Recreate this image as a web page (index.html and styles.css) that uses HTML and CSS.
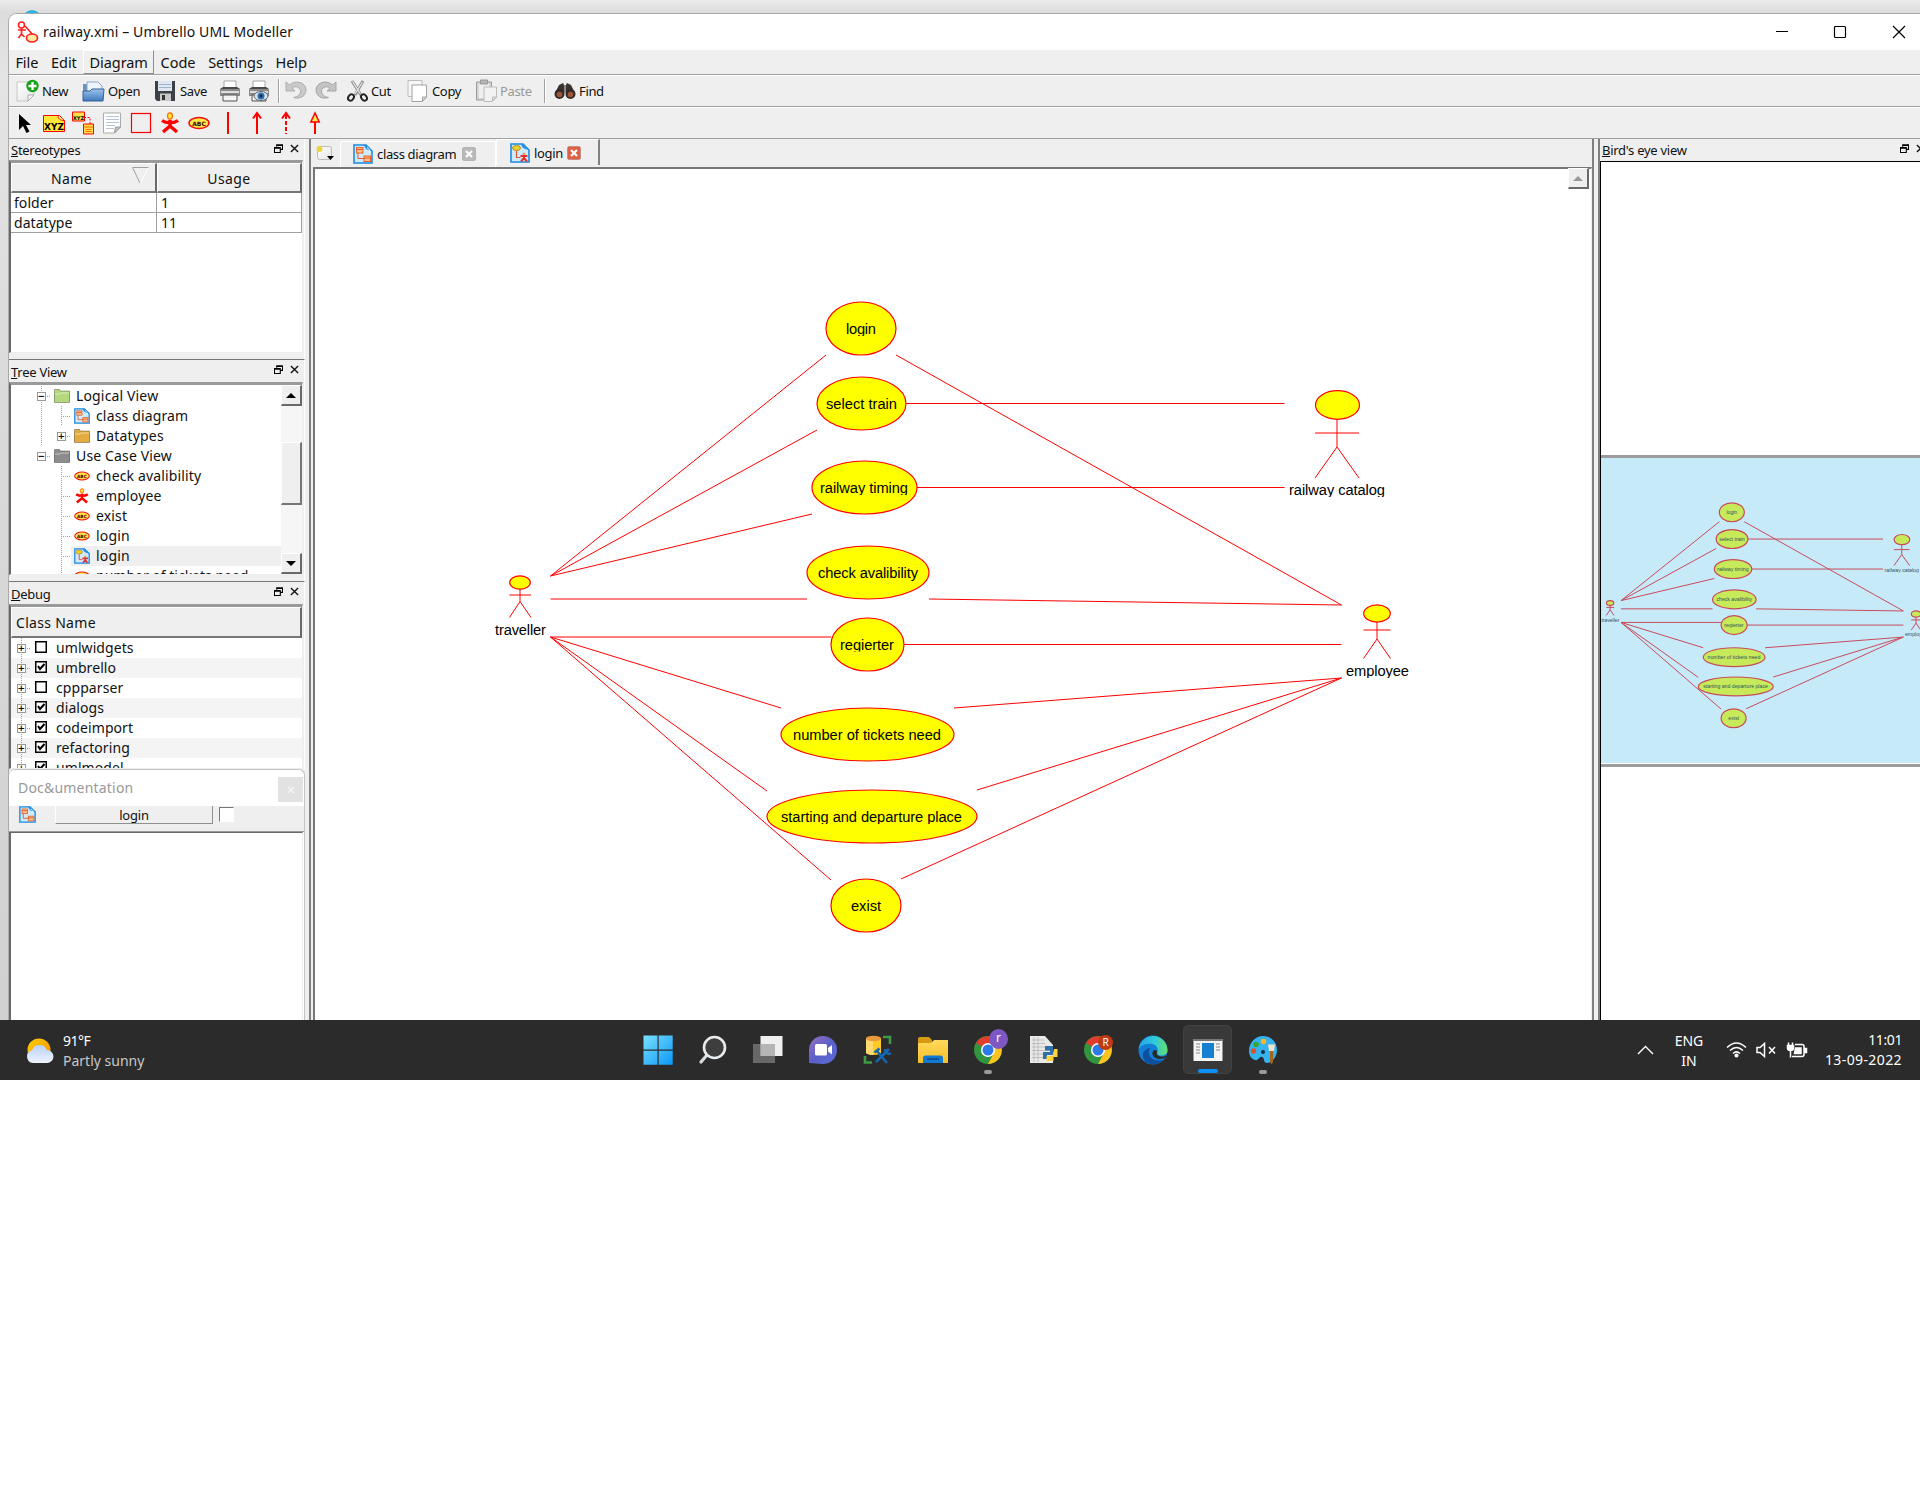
FILE: index.html
```html
<!DOCTYPE html>
<html lang="en">
<head>
<meta charset="utf-8">
<title>railway.xmi – Umbrello UML Modeller</title>
<link rel="stylesheet" href="styles.css">
</head>
<body>
<svg class="defs" width="0" height="0" aria-hidden="true">
  <defs>
    <linearGradient id="gBlue" x1="0" y1="0" x2="0" y2="1"><stop offset="0" stop-color="#9cc4ec"/><stop offset="1" stop-color="#3f79bd"/></linearGradient>
    <linearGradient id="gWin" x1="0" y1="0" x2="1" y2="1"><stop offset="0" stop-color="#7be0ff"/><stop offset="1" stop-color="#0a97f8"/></linearGradient>
    <linearGradient id="gSun" x1="0" y1="0" x2="1" y2="1"><stop offset="0" stop-color="#ffd000"/><stop offset="1" stop-color="#f58a00"/></linearGradient>
    <linearGradient id="gCloud" x1="0" y1="0" x2="0" y2="1"><stop offset="0" stop-color="#b9d2fb"/><stop offset="1" stop-color="#eef2fa"/></linearGradient>
    <linearGradient id="gChat" x1="0" y1="0" x2="1" y2="1"><stop offset="0" stop-color="#9a6fc0"/><stop offset=".5" stop-color="#5b5fc7"/><stop offset="1" stop-color="#5a6fe0"/></linearGradient>
    <linearGradient id="gFold" x1="0" y1="0" x2="0" y2="1"><stop offset="0" stop-color="#ffd95c"/><stop offset="1" stop-color="#f9bd28"/></linearGradient>
    <linearGradient id="gEdge" x1="0" y1="0" x2="1" y2="0"><stop offset="0" stop-color="#22a4e8"/><stop offset=".55" stop-color="#30c8dd"/><stop offset="1" stop-color="#65e06a"/></linearGradient>
    <linearGradient id="gPage" x1="0" y1="0" x2="1" y2="1"><stop offset="0" stop-color="#fff"/><stop offset="1" stop-color="#e4e4e4"/></linearGradient>
    <symbol id="classdoc" viewBox="0 0 20 20"><path d="M1 1h12l6 6v12H1z" fill="#cfeafa" stroke="#1d8ae0" stroke-width="1.6"/><path d="M11 1c1 4 3 5 8 6L13 1z" fill="#2492e6"/><path d="M14 3.500c2 1 3 2.500 2.500 5" fill="none" stroke="#fff" stroke-width="1"/><rect x="3.500" y="3.500" width="6.500" height="5.500" fill="#ffbf8a" stroke="#e0662c"/><rect x="11" y="12" width="6.500" height="5.500" fill="#ffbf8a" stroke="#e0662c"/><path d="M5 9v5.500h6M3.500 5.500H10M11 14h6" fill="none" stroke="#e0562c"/></symbol>
    <symbol id="usedoc" viewBox="0 0 20 20"><path d="M1 1h12l6 6v12H1z" fill="#cfeafa" stroke="#1d8ae0" stroke-width="1.600"/><path d="M11 1c1 4 3 5 8 6L13 1z" fill="#2492e6"/><ellipse cx="6.500" cy="5" rx="4" ry="2.500" fill="#e8d430" stroke="#b98820"/><path d="M6.500 8v6.500h4" fill="none" stroke="#e0562c" stroke-width="1.200"/><circle cx="14" cy="11" r="1.500" fill="#e8a060"/><path d="M10.500 13h7M14 12.500v2.500l-3 3.500M14 15l3 3.500" stroke="#e83030" stroke-width="2" fill="none"/></symbol>
    <symbol id="folder" viewBox="0 0 16 16"><path d="M.5 1.500h5l1 1.500h9v11H.5z" fill="currentColor"/><path d="M.5 5h5.500l1-1h8.500v10.500H.5z" fill="currentColor"/><path d="M1 6h5l1-1h8" stroke="#fff" stroke-opacity=".5" fill="none"/><path d="M.5 1.500h5l1 1.500h9v11.500H.5z" stroke="#000" stroke-opacity=".3" fill="none"/></symbol>
    <symbol id="oval" viewBox="0 0 22 13"><ellipse cx="11" cy="6.500" rx="10" ry="5.500" fill="#ffe94a" stroke="#f20d0d" stroke-width="1.500"/><text x="11" y="9.200" text-anchor="middle" class="tiny">ABC</text></symbol>
    <symbol id="actor" viewBox="0 0 20 22"><ellipse cx="10" cy="4" rx="2.500" ry="3.200" fill="#ffe23a" stroke="#ff6a00" stroke-width="1.200"/><path d="M2 8.500c4 3 12 3 16 0M10 8v6M3 20l7-6 7 6" fill="none" stroke="#f00" stroke-width="3.400"/></symbol>
    <symbol id="float" viewBox="0 0 10 10"><path d="M3 3V.8h6.500V6H7.500M.5 4h6.500v5.500H.5zM.5 4.800h6.500M3 1.500h6.500" fill="none" stroke="#000" stroke-width="1.200"/></symbol>
    <symbol id="x" viewBox="0 0 10 10"><path d="M1 1l8 8M9 1L1 9" stroke="currentColor" stroke-width="1.500" fill="none"/></symbol>
    <symbol id="tabx" viewBox="0 0 14 14"><rect x=".5" y=".5" width="13" height="13" rx="1.500" fill="currentColor" stroke="#000" stroke-opacity=".15"/><path d="M4 4l6 6M10 4l-6 6" stroke="#fff" stroke-width="2.200"/></symbol>
    <symbol id="printer" viewBox="0 0 22 22"><path d="M5 1h12v8H5z" fill="#fff" stroke="#a6a6a6"/><path d="M1 9h20v7H1z" fill="#8c8c8c"/><path d="M1 9l3-2h14l3 2z" fill="#4b4b4b"/><path d="M2 12h18" stroke="#ddd" stroke-width="2"/><path d="M4 15h14v6H4z" fill="#f4f4f4" stroke="#555"/></symbol>
    <symbol id="chrome" viewBox="0 0 30 30"><circle cx="15" cy="15" r="14" fill="#31943f"/><path d="M15 15L3 8A14 14 0 0 1 27.500 9z" fill="#e33b2e"/><path d="M15 29A14 14 0 0 0 27.500 9H15l6 9z" fill="#fcc31e"/><circle cx="15" cy="15" r="7" fill="#fff"/><circle cx="15" cy="15" r="5.500" fill="#2c7be8"/></symbol>
  </defs>
</svg>

<div class="desktop">
  <svg class="peek" width="14" height="3" viewBox="0 0 14 3"><path d="M0 3q7-6 14 0z" fill="#27b4e0"/></svg>
  <div class="window">
    <header class="titlebar">
      <svg class="logo" width="22" height="22" viewBox="0 0 22 22" fill="none" stroke="#f22"><circle cx="4.500" cy="4" r="3" stroke-width="1.600"/><path d="M1 9h8M4.500 7v6l-3 4M4.500 13l3 3M8 5l8 9" stroke-width="1.700"/><ellipse cx="15" cy="17" rx="5.500" ry="4" fill="#ffe9a0" stroke-width="1.700"/></svg>
      <span class="title">railway.xmi – Umbrello UML Modeller</span>
      <svg class="winbtns" width="146" height="16" viewBox="0 0 146 16" fill="none" stroke="#000" stroke-width="1.200"><path d="M2 7.500h12"/><rect x="60.500" y="2.500" width="11" height="11" rx="1"/><path d="M119 2l12 12M131 2l-12 12"/></svg>
    </header>
    <nav class="menubar"><span>File</span><span>Edit</span><span class="active">Diagram</span><span>Code</span><span>Settings</span><span>Help</span></nav>
    <div class="toolbar">
      <div class="tool w66"><svg width="24" height="24" viewBox="0 0 24 24"><path d="M1 3h17v13l-6 6H1z" fill="url(#gPage)" stroke="#c4c8c4"/><path d="M12 22v-6h6z" fill="#f8f8f8" stroke="#aaa"/><circle cx="16.500" cy="7" r="6.200" fill="#17a317"/><path d="M16.500 3v8M12.500 7h8" stroke="#fff" stroke-width="2.400"/></svg>New</div>
      <div class="tool w72"><svg width="24" height="24" viewBox="0 0 24 24"><path d="M1 5h6l2 3v14H1z" fill="#6d93bd"/><path d="M5 3h11l4 4v9H5z" fill="#eef4fb" stroke="#8ba6c4"/><path d="M1 12h7l2-2h12l-1 12H1z" fill="url(#gBlue)" stroke="#35619a"/></svg>Open</div>
      <div class="tool wide w64"><svg width="22" height="22" viewBox="0 0 22 22"><path d="M1 1h20v20H3l-2-2z" fill="#3d4046"/><rect x="4" y="1" width="14" height="10" fill="#dfe8f2"/><path d="M5 4.500h12M5 7.500h12" stroke="#9db3c9"/><rect x="6" y="13.500" width="11" height="7.500" fill="#c9c9c9"/><rect x="8" y="15" width="3" height="5" fill="#333"/></svg>Save</div>
      <div class="tool w29"><svg width="22" height="22"><use href="#printer"/></svg></div>
      <div class="tool w30"><svg width="23" height="22" viewBox="0 0 23 22"><use href="#printer" width="22" height="22"/><ellipse cx="13" cy="16" rx="7" ry="4.500" fill="#cfe4f5" stroke="#666"/><circle cx="13" cy="16" r="3.500" fill="#2f6fae"/><circle cx="13" cy="16" r="1.400" fill="#123"/></svg></div>
      <div class="sep"></div>
      <div class="tool w29"><svg width="23" height="22" viewBox="0 0 23 22"><path d="M1 2v9h9L7 8c4-3 9 0 8.500 4-.5 3-3 5-7 5.500 6 2 12-1 12.500-7C21.500 3 11-1 4.500 5z" fill="#c9c9c9" stroke="#adadad"/></svg></div>
      <div class="tool w33"><svg width="23" height="22" viewBox="0 0 23 22"><path d="M22 2v9h-9l3-3c-4-3-9 0-8.500 4 .5 3 3 5 7 5.500-6 2-12-1-12.500-7C1.500 3 12-1 18.500 5z" fill="#c4c4c4" stroke="#a5a5a5"/></svg></div>
      <div class="tool w60"><svg width="22" height="24" viewBox="0 0 22 24" fill="none"><path d="M5 2l9 14M16 2L8 16" stroke="#8d8d8d" stroke-width="3"/><path d="M5.500 2.500l8 12.500M15.500 3L8 15" stroke="#e8e8e8" stroke-width="1.200"/><ellipse cx="4" cy="18.500" rx="2.600" ry="3.400" stroke="#222" stroke-width="2" transform="rotate(35 4 18.500)"/><ellipse cx="17" cy="18.500" rx="2.600" ry="3.400" stroke="#222" stroke-width="2" transform="rotate(-35 17 18.500)"/></svg>Cut</div>
      <div class="tool wide w68"><svg width="21" height="24" viewBox="0 0 21 24"><path d="M1 1.500h14v16H1z" fill="#f6f6f6" stroke="#bdbdbd"/><path d="M5 6h14.500v12l-4 4.500H5z" fill="#fff" stroke="#a2a2a2"/><path d="M15.500 22v-4h4z" fill="#e2e2e2" stroke="#a2a2a2"/></svg>Copy</div>
      <div class="tool w69 off"><svg width="23" height="24" viewBox="0 0 23 24"><path d="M1.500 3h15v18h-15z" fill="#d5d5d5" stroke="#9a9a9a"/><path d="M4 5h10v14H4z" fill="#efefef"/><path d="M5.500 1h7v4h-7z" fill="#b5b5b5" stroke="#999"/><path d="M9 8h12.500v10l-4 4.500H9z" fill="#f2f2f2" stroke="#bcbcbc"/><path d="M17.500 22v-4h4z" fill="#ddd" stroke="#bbb"/></svg>Paste</div>
      <div class="sep"></div>
      <div class="tool find"><svg width="22" height="18" viewBox="0 0 22 18"><path d="M5 3l4-2 1 2h2l1-2 4 2 4 8H1z" fill="#3b3330"/><circle cx="5.500" cy="12" r="5" fill="#332b29"/><circle cx="16.500" cy="12" r="5" fill="#332b29"/><circle cx="5.500" cy="12.500" r="2.800" fill="#9c5636"/><circle cx="16.500" cy="12.500" r="2.800" fill="#9c5636"/><path d="M10 3h2v8h-2z" fill="#888"/></svg>Find</div>
    </div>
    <div class="toolbar palette">
      <svg viewBox="0 0 24 24"><path d="M6 3v16l4-4 3.500 7 3-1.500L13 14h5z" fill="#000"/></svg>
      <svg viewBox="0 0 24 24"><path d="M1.500 4.500h16l5 5v11h-21z" fill="#ffe83a" stroke="#f00"/><path d="M16 4.500c0 3 2 5 6.500 5" fill="#fff3a0" stroke="#f00"/><text x="12" y="18.500" text-anchor="middle" class="xyz">XYZ</text></svg>
      <svg viewBox="0 0 24 24"><path d="M1.500 1h12v9h-12zM12.500 13h10v10h-10z" fill="#ffe04a" stroke="#f00"/><path d="M12.500 16h10M14.500 18.500h6M14.500 20.500h6" stroke="#f60"/><path d="M13 6.500h6V13" fill="none" stroke="#f00" stroke-dasharray="2 1.500"/><text x="7.500" y="8.500" text-anchor="middle" class="xyz s">XYZ</text></svg>
      <svg viewBox="0 0 24 24"><path d="M3.500 2h17v14l-6 6h-11z" fill="#fff" stroke="#aaa"/><path d="M6 5.500h13M6 8.500h13M6 11.500h13M6 14.500h9M6 17.500h8" stroke="#b8c4d4"/><path d="M14.500 22l1-6h5z" fill="#c4c4c4" stroke="#999"/></svg>
      <svg viewBox="0 0 24 24"><rect x="2.500" y="2.500" width="19" height="19" fill="none" stroke="#f00" stroke-width="1.200"/></svg>
      <svg viewBox="0 0 24 24"><use href="#actor" x="1" y="1" width="22" height="22"/></svg>
      <svg viewBox="0 0 24 24"><use href="#oval" x="1" y="5" width="22" height="14"/></svg>
      <svg viewBox="0 0 24 24"><path d="M12 1v22" stroke="#f00" stroke-width="2"/></svg>
      <svg viewBox="0 0 24 24"><path d="M12 2v21M8 7.500L12 2l4 5.500" fill="none" stroke="#f00" stroke-width="2"/></svg>
      <svg viewBox="0 0 24 24"><path d="M12 4v19" stroke="#f00" stroke-width="2" stroke-dasharray="4 2"/><path d="M8 7.500L12 2l4 5.500" fill="none" stroke="#f00" stroke-width="2"/></svg>
      <svg viewBox="0 0 24 24"><path d="M12 10v13" stroke="#f00" stroke-width="2"/><path d="M7.800 11L12 2l4.200 9z" fill="#ffe84a" stroke="#f00" stroke-width="1.500"/></svg>
    </div>

    <div class="main">
      <aside class="left">
        <section class="dock stereo">
          <h2><span><u>S</u>tereotypes</span><i><svg width="9" height="9"><use href="#float"/></svg><svg width="9" height="9"><use href="#x"/></svg></i></h2>
          <div class="pane">
            <div class="grid head"><b>Name<svg width="17" height="17" viewBox="0 0 17 17" fill="none"><path d="M8 16L.5.5h16" stroke="#a0a0a0"/><path d="M16 1L8.500 16" stroke="#fff"/></svg></b><b>Usage</b></div>
            <div class="grid"><span>folder</span><span>1</span></div>
            <div class="grid"><span>datatype</span><span>11</span></div>
          </div>
        </section>
        <section class="dock treeview">
          <h2><span><u>T</u>ree View</span><i><svg width="9" height="9"><use href="#float"/></svg><svg width="9" height="9"><use href="#x"/></svg></i></h2>
          <div class="pane split">
            <div class="tree">
              <div class="row"><s class="g v h"><em>−</em></s><svg class="green"><use href="#folder"/></svg>Logical View</div>
              <div class="row"><s class="g v"></s><s class="g v h"></s><svg><use href="#classdoc"/></svg>class diagram</div>
              <div class="row"><s class="g v"></s><s class="g h"><em>+</em></s><svg class="gold"><use href="#folder"/></svg>Datatypes</div>
              <div class="row"><s class="g h"><em>−</em></s><svg class="gray"><use href="#folder"/></svg>Use Case View</div>
              <div class="row"><s class="g"></s><s class="g v h"></s><svg><use href="#oval"/></svg>check avalibility</div>
              <div class="row"><s class="g"></s><s class="g v h"></s><svg><use href="#actor"/></svg>employee</div>
              <div class="row"><s class="g"></s><s class="g v h"></s><svg><use href="#oval"/></svg>exist</div>
              <div class="row"><s class="g"></s><s class="g v h"></s><svg><use href="#oval"/></svg>login</div>
              <div class="row"><s class="g"></s><s class="g v h"></s><span class="sel"><svg><use href="#usedoc"/></svg>login</span></div>
              <div class="row last"><s class="g"></s><s class="g v h"></s><svg><use href="#oval"/></svg>number of tickets need</div>
            </div>
            <div class="scroll"><div class="sb"><svg width="10" height="5" viewBox="0 0 10 5"><path d="M0 5l5-5 5 5z"/></svg></div><div class="thumb"></div><div class="sb"><svg width="10" height="5" viewBox="0 0 10 5"><path d="M0 0l5 5 5-5z"/></svg></div></div>
          </div>
        </section>
        <section class="dock debug">
          <h2><span><u>D</u>ebug</span><i><svg width="9" height="9"><use href="#float"/></svg><svg width="9" height="9"><use href="#x"/></svg></i></h2>
          <div class="pane">
            <div class="classhead">Class Name</div>
            <div class="checks">
              <div class="row"><s class="g v h"><em>+</em></s><svg class="cb"><path d="M.75.75h10.500v10.500H.75z"/></svg>umlwidgets</div>
              <div class="row"><s class="g v h"><em>+</em></s><svg class="cb"><path d="M.75.75h10.500v10.500H.75z"/><path class="tick" d="M3 5l2 3 4.500-5"/></svg>umbrello</div>
              <div class="row"><s class="g v h"><em>+</em></s><svg class="cb"><path d="M.75.75h10.500v10.500H.75z"/></svg>cppparser</div>
              <div class="row"><s class="g v h"><em>+</em></s><svg class="cb"><path d="M.75.75h10.500v10.500H.75z"/><path class="tick" d="M3 5l2 3 4.500-5"/></svg>dialogs</div>
              <div class="row"><s class="g v h"><em>+</em></s><svg class="cb"><path d="M.75.75h10.500v10.500H.75z"/><path class="tick" d="M3 5l2 3 4.500-5"/></svg>codeimport</div>
              <div class="row"><s class="g v h"><em>+</em></s><svg class="cb"><path d="M.75.75h10.500v10.500H.75z"/><path class="tick" d="M3 5l2 3 4.500-5"/></svg>refactoring</div>
              <div class="row"><s class="g v h"><em>+</em></s><svg class="cb"><path d="M.75.75h10.500v10.500H.75z"/><path class="tick" d="M3 5l2 3 4.500-5"/></svg>umlmodel</div>
            </div>
          </div>
        </section>
        <section class="docpanel">
          <div class="doctitle"><span>Doc&amp;umentation</span><div><svg width="8" height="8"><use href="#x"/></svg></div></div>
          <div class="docbar"><svg width="17" height="17"><use href="#classdoc"/></svg><div class="docbtn">login</div><div class="doccheck"></div></div>
          <div class="doctext"></div>
        </section>
      </aside>

      <main class="center">
        <div class="tabs">
          <svg class="newtab" width="18" height="16" viewBox="0 0 18 16"><rect x="1.500" y="1.500" width="14" height="13" rx="2" fill="url(#gPage)" stroke="#bbb"/><circle cx="3.500" cy="4" r="3" fill="#f0d43c"/><path d="M11 11h7l-3.500 4z" fill="#000"/></svg>
          <div class="tab"><svg width="20" height="20"><use href="#classdoc"/></svg><span>class diagram</span><svg class="tx" width="14" height="14"><use href="#tabx"/></svg></div>
          <div class="tab current"><svg width="20" height="20"><use href="#usedoc"/></svg><span>login</span><svg class="tx red" width="14" height="14"><use href="#tabx"/></svg></div>
        </div>
        <div class="canvas">
          <svg class="diagram" viewBox="315 169 1252 851" width="1252" height="851">
            <defs><clipPath id="labels"><path d="M820 315h80v21h-80zM800 390h130v40h-130zM800 474h130v21h-130zM800 560h140v21h-140zM820 630h100v21.500h-100zM760 720h220v40H760zM760 804h220v20H760zM820 895h100v30H820zM480 615h90v30h-90zM1280 478h120v19h-120zM1330 658h100v20h-100z"/></clipPath></defs>
            <g id="model">
              <g class="link"><path d="M550.500 576L826 355M550.500 576L817 430M550.500 576L812 514M550.500 599H807M550.500 637H831M550.500 637L781 708M550.500 637L767 791M550.500 637L831 880"/><path d="M896 355L1341.500 605M906 403.500H1284.500M917 487.500H1284.500M929 599L1341.500 605M904 644.500H1341.500M954 708L1341.500 678L977 790M1341.500 678L901 879"/></g>
              <g class="shape"><ellipse cx="861" cy="328.500" rx="35" ry="26.500"/><ellipse cx="861.500" cy="403.500" rx="44.500" ry="26.500"/><ellipse cx="864.500" cy="487.500" rx="52.500" ry="26.500"/><ellipse cx="868" cy="572.500" rx="61" ry="26.500"/><ellipse cx="867.500" cy="644.500" rx="36.500" ry="26.500"/><ellipse cx="867.500" cy="734.500" rx="86.500" ry="26.500"/><ellipse cx="872" cy="816.500" rx="105" ry="26.500"/><ellipse cx="866" cy="905.500" rx="35" ry="26.500"/><ellipse cx="520" cy="582.500" rx="10.300" ry="6.700"/><ellipse cx="1337.500" cy="405" rx="22" ry="14.300"/><ellipse cx="1377" cy="613.500" rx="13.300" ry="8.600"/></g>
              <g class="link"><path d="M520 589v12.500l-10.500 16M520 601.500l11 16M509.500 595h21.500M1337 419.500V447l-22 31M1337 447l22 31M1315 433h44M1377 622v17l-13.500 19.500M1377 639l13.500 19.500M1363.500 630h27"/></g>
              <g class="label" clip-path="url(#labels)"><text x="861" y="334" textLength="30">login</text><text x="861.500" y="409" textLength="71">select train</text><text x="864" y="493" textLength="88">railway timing</text><text x="868" y="578" textLength="100">check avalibility</text><text x="867" y="649.500" textLength="54">regierter</text><text x="867" y="740" textLength="148">number of tickets need</text><text x="871.500" y="822" textLength="181">starting and departure place</text><text x="866" y="911" textLength="30">exist</text><text x="520.500" y="635" textLength="51">traveller</text><text x="1337" y="495" textLength="96">railway catalog</text><text x="1377.500" y="676" textLength="63">employee</text></g>
            </g>
          </svg>
          <div class="sb dim"><svg width="10" height="5" viewBox="0 0 10 5"><path d="M0 5l5-5 5 5z"/></svg></div>
        </div>
      </main>

      <aside class="right">
        <h2><span><u>B</u>ird's eye view</span><i><svg width="9" height="9"><use href="#float"/></svg><svg width="9" height="9"><use href="#x"/></svg></i></h2>
        <div class="bird"><div class="visible"><svg class="mini" width="319" height="306" viewBox="494.500 176.500 893.600 857.100"><use href="#model"/></svg></div></div>
      </aside>
    </div>
  </div>

  <footer class="taskbar">
    <div class="weather"><svg width="28" height="26" viewBox="0 0 28 26"><circle cx="13" cy="12" r="11.500" fill="url(#gSun)"/><path d="M7 25a6.500 6.500 0 0 1-1-12.800A8 8 0 0 1 21 12a6.500 6.500 0 0 1 0 13z" fill="url(#gCloud)"/></svg><div><p class="temp">91°F</p><p class="sub">Partly sunny</p></div></div>
    <div class="apps">
      <div><svg viewBox="0 0 30 30"><path d="M.5.500h14v14H.5zM15.700.500h14v14h-14zM.5 15.700h14v14H.5zM15.700 15.700h14v14h-14z" fill="url(#gWin)"/></svg></div>
      <div><svg viewBox="0 0 30 30" fill="none"><path d="M9 20l-6 7" stroke="#d9dde0" stroke-width="3.200" stroke-linecap="round"/><circle cx="16.500" cy="12.500" r="10.500" fill="#3e3e3e" stroke="#e9ecee" stroke-width="2.600"/></svg></div>
      <div><svg viewBox="0 0 30 30"><path d="M7.500 1h22v20h-22z" fill="#efefef"/><path d="M0 9h22v19H0z" fill="#7d7d7d" fill-opacity=".75"/><path d="M7.500 9H22v12H7.500z" fill="#b5b5b5"/></svg></div>
      <div><svg viewBox="0 0 30 30"><path d="M1 28V15a14 14 0 1 1 14 14z" fill="url(#gChat)"/><rect x="7" y="9" width="12" height="11.500" rx="1.500" fill="#fff"/><path d="M20 13l4-3v9.500l-4-3z" fill="#fff"/></svg></div>
      <div><svg viewBox="0 0 30 30"><path d="M3 3v15c3 2.500 12 2.500 15 0V3z" fill="#ffc928"/><path d="M3 3v15c2 1.500 5 2 7 2V3z" fill="#ffd970"/><ellipse cx="10.500" cy="3.500" rx="7.500" ry="2.700" fill="#e89a3c"/><path d="M20 2h7v7M2 21v6.500h7" fill="none" stroke="#3f9a46" stroke-width="2.600"/><path d="M13 27L26 14M14 16l10 12M11.500 17.500l5-4M22 14c0 4 3 6 6 4" stroke="#1467b0" stroke-width="2.600" fill="none"/></svg></div>
      <div><svg viewBox="0 0 30 30"><path d="M0 4q0-2 2-2h9l3 3v5H0z" fill="#d79a12"/><path d="M0 8h13l3-3h14v23H0z" fill="url(#gFold)"/><path d="M5 28v-5q0-2.500 2.500-2.500h15q2.500 0 2.500 2.500v5z" fill="#1378cf"/><path d="M9 24h12" stroke="#0b3f78" stroke-width="1.200"/></svg></div>
      <div class="run"><svg viewBox="0 0 30 30"><use href="#chrome" width="30" height="30"/></svg><span class="badge violet">r</span></div>
      <div><svg viewBox="0 0 30 30"><path d="M2 1h15l8 9v18H2z" fill="#e9e9e9"/><path d="M4 5h13M4 8.500h13M4 12h18M4 15.500h18M4 19h18M4 22.500h18M6 2v25M10 2v25" stroke="#b5b5b5" stroke-width=".8"/><path d="M17 11h8v9h-6v4h-4v-7h7v-1.500h-5z" fill="#2f6fa8"/><path d="M26 14h3.500v8h-4v4h-7v-5h6z" fill="#ffd23e"/></svg></div>
      <div><svg viewBox="0 0 30 30"><use href="#chrome" width="30" height="30"/></svg><span class="badge rust">R</span></div>
      <div><svg viewBox="0 0 30 30"><circle cx="15" cy="15" r="14.500" fill="#137fd4"/><path d="M.6 14A14.500 14.500 0 0 1 29.500 15c0 4-3 5.500-6 5.500s-5-1-4-3.500c1-4-1-7-5-8C8 8 3 10 .6 14z" fill="url(#gEdge)"/><path d="M12 13c-4 8 3 14 13 12-4 5-12 6-17 2-6-5-3-13 4-14z" fill="#0d509f"/><path d="M19 16c-1 4 1.500 5.500 4.500 5.500 2 0 4-.5 5-1.500l-1.500 3c-5 2-11 1-12.500-3.500-.7-3 2-6 4.500-3.500z" fill="#2b2b2b"/></svg></div>
      <div class="on"><svg viewBox="0 0 30 30"><path d="M.5 4h29v22H.5z" fill="#f4f4f4"/><path d="M.5 4h29v2H.5z" fill="#777"/><rect x="9" y="8" width="12" height="15" fill="#1580d0"/><path d="M3 9h4M3 12h4M3 15h4M3 18h4M23 9h4M23 12h4M23 15h4" stroke="#888"/></svg></div>
      <div class="run"><svg viewBox="0 0 30 30"><path d="M15 1c8 0 14 6 14 14 0 7-5 13-10 13-4 0-2-5-5-6s-3 4-7 3C3 24 1 20 1 16 1 8 7 1 15 1z" fill="#35b3ee"/><circle cx="8" cy="9.500" r="2.700" fill="#39a52d"/><circle cx="15.500" cy="6.500" r="2.700" fill="#f9b724"/><circle cx="5.500" cy="16" r="2.700" fill="#e34f2a"/><circle cx="15" cy="17" r="2" fill="#14303f"/><path d="M22 16h3v11q-1.500 4-3 0z" fill="#a5641e"/><path d="M20 9.500h7l-1 6.500h-5z" fill="#f1e3cb"/></svg></div>
    </div>
    <div class="tray">
      <svg class="chev" width="17" height="10" viewBox="0 0 17 10"><path d="M1 9l7.500-7.500L16 9" fill="none" stroke="#fff" stroke-width="1.400"/></svg>
      <div class="lang">ENG<br>IN</div>
      <svg class="status" width="82" height="18" viewBox="0 0 82 18" fill="none" stroke="#fff" stroke-width="1.500"><path d="M1 6.500q9.500-9 19 0M4 9.500q6.500-6 13 0M7 12.500q3.500-3.200 7 0"/><circle cx="10.500" cy="14.500" r="1.300" fill="#fff"/><path d="M31 6.500h3l4.500-4v13l-4.500-4h-3zM43 6l6 6.500M49 6l-6 6.500"/><path d="M69 3.500h7q2 0 2 2v8q0 2-2 2H66M79 7.500h1.500v4H79z"/><path d="M69.500 7h5.500v5.500h-6.500z" fill="#fff"/><path d="M61.500 4.500h6V7q0 2.500-3 2.500t-3-2.500zM64.500 9v7.500M62.500 1.500v3M66.500 1.500v3" fill="#fff"/></svg>
      <div class="clock">11:01<br><span>13-09-2022</span></div>
    </div>
  </footer>
</div>
</body>
</html>
```
FILE: styles.css
```css
* { box-sizing: border-box; }
body { margin: 0; background: #fff; color: #111; font: 14px/20px "Noto Sans", "Open Sans", sans-serif; }
svg { display: block; flex: none; }
.defs { position: absolute; }
h2, p { margin: 0; font-weight: 400; }

.desktop { width: 1920px; height: 1080px; padding: 10px 0 0 8px; overflow: hidden; display: flex; flex-direction: column; background: linear-gradient(#ebebeb, #dcdcdc 13px, #e4e4e4 80px, #dadada 400px, #d0d0d0); }
.peek { margin-left: 17px; }
.window { height: 1007px; flex: none; border: 1px solid #aaa; border-width: 1px 0 0 1px; border-radius: 9px 0 0 0; overflow: hidden; background: #efefef; display: flex; flex-direction: column; }

.titlebar { height: 36px; flex: none; background: #fff; display: flex; align-items: center; padding-left: 8px; }
.title { margin-left: 4px; font-size: 14px; letter-spacing: .14px; flex: 1; }
.menubar { height: 25px; flex: none; display: flex; border-bottom: 1px solid #a0a0a0; font-size: 14.500px; line-height: 24px; letter-spacing: -.07px; }
.menubar span { padding: 0 6.400px; }
.menubar .active { border: 1px solid #fff; border-right-color: #909090; border-bottom-color: #909090; line-height: 23px; padding: 0 5.400px; }
.toolbar { height: 32px; flex: none; display: flex; align-items: center; padding-left: 7px; border-top: 1px solid #fff; border-bottom: 1px solid #a0a0a0; }
.tool { display: flex; align-items: center; gap: 2px; font-size: 13px; letter-spacing: -.35px; height: 26px; }
.wide { gap: 4px; }
.off { color: #999; }
.w29 { width: 29px; } .w30 { width: 30px; } .w33 { width: 33px; } .w60 { width: 60px; } .w64 { width: 65px; }
.w66 { width: 66px; } .w68 { width: 68px; } .w69 { width: 69px; } .w72 { width: 72px; }
.sep { width: 2px; height: 24px; border-left: 1px solid #a0a0a0; border-right: 1px solid #fff; margin-right: 5px; }
.find { margin-left: 3px; gap: 3px; }
.palette { padding-left: 4px; gap: 5px; }
.palette svg { width: 24px; height: 24px; }
.tiny { font: bold 6px "DejaVu Sans", sans-serif; fill: #400; }
.xyz { font: bold 9px "DejaVu Sans", sans-serif; fill: #000; }
.xyz.s { font-size: 5px; }

.main { flex: 1; display: flex; min-height: 0; }
.left { width: 296px; display: flex; flex-direction: column; flex: none; }
h2 { height: 21px; display: flex; justify-content: space-between; align-items: center; font-size: 13px; letter-spacing: -.27px; padding: 0 5px 0 2px; flex: none; }
h2 i { display: flex; gap: 7px; margin-bottom: 3px; }
.dock { flex: none; display: flex; flex-direction: column; border-right: 1px solid #fff; }
.stereo { height: 221px; padding-bottom: 6px; border-bottom: 1px solid #777; }
.treeview { height: 222px; padding-bottom: 6px; border-bottom: 1px solid #777; }
.debug { height: 187px; }
.pane { flex: 1; min-height: 0; margin-right: 1px; background: #fff; border: 1px solid #696969; border-top: 3px solid #9a9a9a; border-right-color: #eee; border-bottom-color: #eee; border-left-width: 2px; overflow: hidden; }
.treeview h2, .debug h2 { height: 22px; }
.treeview h2 span, .debug h2 span { padding-top: 2px; }
.grid { display: grid; grid-template-columns: 146px 145px; height: 20px; border-bottom: 1px solid #a0a0a0; }
.grid span { padding-left: 3px; border-right: 1px solid #a0a0a0; line-height: 20px; letter-spacing: .05px; }
.grid span + span { padding-left: 4px; }
.head { height: 30px; border-bottom: 0; }
.head b, .classhead { font-weight: 400; background: #efefef; border: 1px solid #fff; border-right: 2px solid #696969; border-bottom: 2px solid #777; }
.head b { display: flex; justify-content: center; align-items: center; letter-spacing: .4px; padding-top: 2px; }
.head b svg { margin: -6px -57px 0 40px; width: 17px; }
.head b:first-child { padding-right: 24px; }
.split { display: flex; }
.tree { flex: 1; min-width: 0; padding-top: 1px; }
.row { display: flex; align-items: center; height: 20px; white-space: nowrap; letter-spacing: .15px; }
.tree .row { padding-left: 20px; }
.tree .last { letter-spacing: 0; }
.tree svg { width: 16px; height: 16px; margin: 0 6px 0 3px; }
.g { width: 20px; height: 20px; flex: none; display: grid; place-items: center; text-decoration: none; background-repeat: no-repeat; }
.g.v { background-image: repeating-linear-gradient(#a0a0a0 0 1px, transparent 1px 2px); background-size: 1px 100%; background-position: 10px 0; }
.g.h { background-image: repeating-linear-gradient(90deg, #a0a0a0 0 1px, transparent 1px 2px); background-size: 10px 1px; background-position: 10px 10px; }
.g.v.h { background-image: repeating-linear-gradient(#a0a0a0 0 1px, transparent 1px 2px), repeating-linear-gradient(90deg, #a0a0a0 0 1px, transparent 1px 2px); background-size: 1px 100%, 10px 1px; background-position: 10px 0, 10px 10px; background-repeat: no-repeat; }
.g em { width: 9px; height: 9px; border: 1px solid #999; background: #fff; font: bold 9px/7px "DejaVu Sans", sans-serif; text-align: center; letter-spacing: 0; }
.green { color: #b4d87c; } .gold { color: #e4ac3e; } .gray { color: #8c8c8c; }
.sel { background: #efefef; flex: 1; height: 20px; display: flex; align-items: center; }
.scroll { width: 21px; flex: none; display: flex; flex-direction: column; background: #f6f6f6; }
.sb { width: 21px; height: 21px; flex: none; background: #efefef; border: 1px solid #fff; border-right: 2px solid #696969; border-bottom: 2px solid #696969; display: grid; place-items: center; }
.dim { fill: #999; }
.thumb { height: 63px; margin: 36px 0 48px; background: #efefef; border: 1px solid #fff; border-right: 2px solid #777; border-bottom: 2px solid #777; flex: none; }
.classhead { height: 31px; padding: 5px 4px 0; letter-spacing: .3px; }
.checks .row:nth-child(even) { background: #f4f4f4; }
.checks .row { letter-spacing: .08px; }
.cb { width: 12px; height: 12px; margin: -3px 9px 0 4px; fill: #fff; stroke: #000; stroke-width: 1.500px; }
.tick { fill: none; stroke-width: 2px; }
.docpanel { flex: 1; display: flex; flex-direction: column; border: 1px solid #c4c4c4; border-width: 1px 1px 0 0; border-radius: 6px 6px 0 0; overflow: hidden; background: #fff; }
.doctitle { height: 36px; flex: none; display: flex; align-items: center; justify-content: space-between; padding: 0 1px 0 9px; color: #999; letter-spacing: .2px; }
.doctitle div { width: 25px; height: 25px; margin-top: 3px; background: #e2e2e2; color: #f8f8f8; display: grid; place-items: center; }
.docbar { height: 26px; flex: none; background: #efefef; display: flex; align-items: flex-start; padding-left: 10px; border-bottom: 1px solid #999; }
.docbtn { width: 158px; height: 18px; margin: 0 6px 0 19px; text-align: center; font-size: 13px; line-height: 19px; letter-spacing: -.2px; border: 1px solid #fff; border-top: 0; border-right-color: #909090; border-bottom-color: #909090; }
.doccheck { width: 15px; height: 15px; margin-top: 1px; background: #fff; border: 1px solid #fff; border-top-color: #777; border-left-color: #777; }
.doctext { flex: 1; border-left: 2px solid #696969; border-top: 1px solid #696969; margin-right: 1px; border-right: 1px solid #eee; }

.center { width: 1285px; flex: none; margin-left: 4px; border-left: 2px solid #808080; display: flex; flex-direction: column; padding-left: 2px; border-right: 2px solid #808080; }
.tabs { height: 28px; flex: none; display: flex; align-items: flex-start; }
.newtab { margin: 6px 6px 0 3px; }
.tab { height: 26px; width: 156px; margin-top: 2px; display: flex; align-items: center; border: 1px solid #fff; border-width: 1px 1px 0 1px; padding: 0 0 2px 12px; font-size: 13px; letter-spacing: -.35px; border-radius: 3px 0 0 0; }
.tab span { margin-left: 4px; width: 85px; }
.tab.current { margin-top: 0; width: 104px; padding: 0 0 0 13px; border-right: 2px solid #808080; }
.tab.current span { width: 33px; }
.tx { color: #b9b9b9; } .red { color: #e06046; }
.canvas { flex: 1; min-height: 0; display: flex; align-items: flex-start; background: #fff; border: 2px solid #777; border-bottom: 0; border-right: 1px solid #eee; }
.canvas .sb { margin-left: 1px; margin-top: -1px; }
.diagram { overflow: hidden; }
.link { fill: none; stroke: red; stroke-width: 1px; }
.link path, .shape ellipse { vector-effect: non-scaling-stroke; }
.shape { fill: #ff0; stroke: red; stroke-width: 1.200px; }
.label { font: 14.670px "Liberation Sans", sans-serif; text-anchor: middle; fill: #000; }

.right { flex: 1; min-width: 0; margin-left: 4px; border-left: 2px solid #808080; display: flex; flex-direction: column; overflow: hidden; }
.right h2 { width: 330px; padding-left: 2px; height: 22px; }
.bird { flex: 1; border-left: 1px solid #000; border-top: 1px solid #000; background: #fff; padding-top: 293px; }
.visible { height: 312px; border-top: 3px solid #9c9c9c; border-bottom: 3px solid #9c9c9c; background: #fff; position: relative; overflow: hidden; }
.visible::after { content: ""; position: absolute; inset: 0 0 1px 0; background: rgba(108, 200, 239, .38); }

.taskbar { height: 60px; flex: none; margin-left: -8px; background: #2b2b2b; color: #fff; display: grid; grid-template-columns: 629px 660px 1fr; align-items: center; }
.weather { display: flex; align-items: center; gap: 9px; padding: 1px 0 0 26px; font-size: 14px; line-height: 20px; letter-spacing: 0; }
.temp { letter-spacing: -.5px; }
.sub { color: #c8c8c8; }
.apps { display: grid; grid-template-columns: repeat(12, 55px); height: 60px; }
.apps > div { display: grid; place-items: center; position: relative; margin: 5px 2px 6px 4px; border-radius: 5px; }
.apps svg { width: 30px; height: 30px; }
.apps .on { background: #393939; border: 1px solid #424242; }
.on::after, .run::after { content: ""; position: absolute; bottom: 0; left: 21px; width: 8px; height: 4px; border-radius: 2px; background: #9a9a9a; }
.on::after { left: 14px; width: 20px; background: #0a91f8; }
.badge { position: absolute; border-radius: 50%; text-align: center; color: #fff; }
.violet { left: 26px; top: 4px; width: 19px; height: 20px; background: #7e57c2; font-size: 12px; line-height: 18px; }
.rust { left: 25px; top: 10px; width: 15px; height: 15px; background: #c03a12; font-size: 10px; line-height: 15px; }
.tray { display: flex; align-items: center; justify-content: flex-end; padding-right: 18px; font-size: 14px; line-height: 20px; }
.lang { width: 40px; margin: 0 17px 0 15px; text-align: center; padding-top: 1px; }
.status { margin-right: 11px; }
.clock { text-align: right; width: 84px; margin-left: -1px; letter-spacing: -.4px; }
.clock span { letter-spacing: .4px; }
```
